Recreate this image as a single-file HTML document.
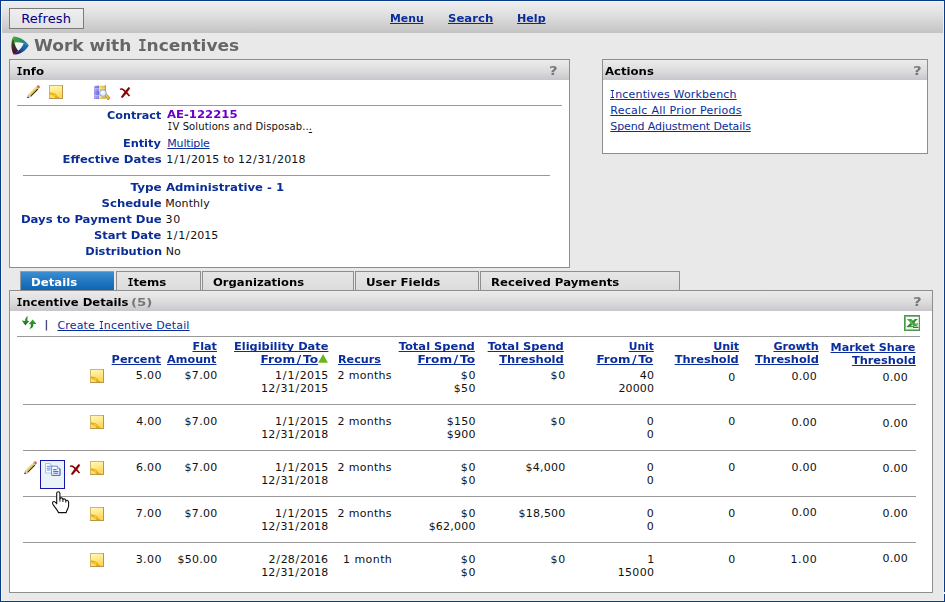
<!DOCTYPE html>
<html lang="en">
<head>
<meta charset="utf-8">
<title>Work with Incentives</title>
<style>
html,body{margin:0;padding:0;}
body{width:945px;height:602px;overflow:hidden;position:relative;background:#e9e9e9;font-family:"DejaVu Sans","Liberation Sans",sans-serif;font-size:11px;}
.abs,.t{position:absolute;}
.t{white-space:nowrap;text-decoration-thickness:1px;text-underline-offset:1px;text-decoration-skip-ink:none;}
a.t{cursor:pointer;}
.si,.sib{font-family:"DejaVu Sans Mono","Liberation Mono",monospace;display:inline-block;transform:scaleX(.72);margin:0 -.075em;text-decoration-thickness:1px;text-underline-offset:1px;}
.sib{transform:scaleX(.86);margin:0 -.03em;}
#frame{left:0;top:0;width:943px;height:600px;border:1px solid #0a3c86;z-index:50;pointer-events:none;box-shadow:inset 1px 1px 0 #f8f2ee, inset -1px -1px 0 #f1efee;}
#hdr{left:1px;top:1px;width:943px;height:32px;background:linear-gradient(#efeded 0%,#e4e3e3 35%,#d0d0d0 75%,#c3c3c3 100%);}
#btn{left:9px;top:8px;width:73px;height:19px;border:1px solid #7b7b7b;background:linear-gradient(#efefef,#e2e2e2);box-sizing:content-box;}
.panel{background:#fff;border:1px solid #8e8e8e;box-sizing:border-box;}
.phead{top:0;height:20px;background:linear-gradient(#ececec 0%,#dddcdd 55%,#c9c6cb 100%);position:absolute;left:0;right:0;}
.hr{height:1px;background:#999;}
.tab{top:271px;height:19px;box-sizing:border-box;border:1px solid #8e8e8e;border-bottom:none;background:linear-gradient(#e6e6e6,#dcdcdc);}
.tab.on{border:1px solid #9a9a9a;border-width:1px 0 0 1px;background:linear-gradient(#3d8dd0 0%,#2178c2 50%,#0f65b2 100%);}
svg{position:absolute;overflow:visible;}
</style>
</head>
<body>
<div class="abs" id="hdr"></div>
<div class="abs" id="btn"></div>

<!-- panels -->
<div class="abs panel" style="left:9px;top:59px;width:561px;height:209px;"><div class="phead"></div></div>
<div class="abs panel" style="left:602px;top:59px;width:326px;height:95px;"><div class="phead"></div></div>
<div class="abs hr" style="left:17px;top:105px;width:545px;"></div>
<div class="abs hr" style="left:23px;top:175px;width:527px;"></div>

<!-- tabs -->
<div class="abs tab on" style="left:20px;width:94px;"></div>
<div class="abs tab" style="left:116px;width:85px;"></div>
<div class="abs tab" style="left:202px;width:152px;"></div>
<div class="abs tab" style="left:355px;width:124px;"></div>
<div class="abs tab" style="left:480px;width:200px;"></div>

<div class="abs panel" style="left:9px;top:290px;width:924px;height:303px;"><div class="phead"></div></div>
<div class="abs hr" style="left:17px;top:336px;width:903px;"></div>
<div class="abs hr" style="left:23px;top:404px;width:893px;"></div>
<div class="abs hr" style="left:23px;top:450px;width:893px;"></div>
<div class="abs hr" style="left:23px;top:496px;width:893px;"></div>
<div class="abs hr" style="left:23px;top:542px;width:893px;"></div>

<svg style="left:10.5px;top:36px" width="19" height="20" viewBox="0 0 19 20"><defs><linearGradient id="lg1" x1="0" y1="0" x2="1" y2="0.5"><stop offset="0" stop-color="#3fae2c"/><stop offset="0.45" stop-color="#2f9a48"/><stop offset="1" stop-color="#1878b4"/></linearGradient><linearGradient id="lg2" x1="1" y1="0" x2="0" y2="1"><stop offset="0" stop-color="#1878b8"/><stop offset="0.4" stop-color="#1a62a8"/><stop offset="0.72" stop-color="#2a2870"/><stop offset="1" stop-color="#3c0848"/></linearGradient><linearGradient id="lg3" x1="0" y1="0" x2="0" y2="1"><stop offset="0" stop-color="#3a9a2c"/><stop offset="0.45" stop-color="#3a3a22"/><stop offset="1" stop-color="#4a0634"/></linearGradient><filter id="lb" x="-10%" y="-10%" width="120%" height="120%"><feGaussianBlur stdDeviation="0.35"/></filter></defs><path d="M3,6.2 L13,7 L7.3,15 Z" fill="#f3f3f3"/><g filter="url(#lb)"><path d="M2.2,0.4 C7.5,0.2 14.5,4 17.8,9.4 L12.6,7.3 C9.4,6.1 6,6.2 3.5,6.6 Z" fill="url(#lg1)"/><path d="M17.8,9.4 C15,14.6 8.5,18.8 2.6,18.6 L7.3,14.7 C9.8,12.9 11.8,10.2 12.6,7.3 Z" fill="url(#lg2)"/><path d="M2.6,18.6 C-0.2,13 -0.2,6 2.2,0.4 L3.5,6.6 C3.9,9.8 5.4,12.8 7.3,14.7 Z" fill="url(#lg3)"/></g></svg>
<svg style="left:27px;top:85px" width="14" height="14" viewBox="0 0 14 14"><g transform="translate(0.4,13) rotate(-45.5)"><path d="M0,0 L3.6,-1.6 L3.6,1.6 Z" fill="#f4f0e6" stroke="#777" stroke-width="0.5"/><path d="M0,0 L1.6,-0.75 L1.6,0.75 Z" fill="#111"/><rect x="3.6" y="-1.6" width="10" height="3.2" fill="#ead060"/><rect x="3.6" y="-1.6" width="10" height="1" fill="#f6eaa0"/><rect x="3.6" y="0.7" width="10" height="1" fill="#141000"/><path d="M5,-1.6V0.7M6.4,-1.6V0.7M7.8,-1.6V0.7M9.2,-1.6V0.7M10.6,-1.6V0.7M12,-1.6V0.7" stroke="#c4a038" stroke-width="0.5"/><rect x="13.6" y="-1.6" width="0.9" height="3.2" fill="#b4c2d8"/><path d="M14.5,-1.6 H15.6 Q17,-1.6 17,0 Q17,1.6 15.6,1.6 H14.5 Z" fill="#cf6456"/><path d="M14.5,-1.6 H15.6 Q16.5,-1.6 16.8,-0.6 H14.5 Z" fill="#e8988a"/></g></svg>
<svg style="left:49px;top:85px" width="14" height="14" viewBox="0 0 14 14"><defs><linearGradient id="nga" x1="0" y1="0" x2="0.25" y2="1"><stop offset="0" stop-color="#fff8b8"/><stop offset="0.5" stop-color="#ffe98a"/><stop offset="1" stop-color="#ffd55a"/></linearGradient></defs><rect x="0" y="0" width="14" height="14" fill="#b9974a"/><rect x="0" y="0" width="13" height="13" fill="#d3b56a"/><rect x="1" y="1" width="12" height="12" fill="url(#nga)"/><path d="M1,9 L1,13 L8,13 C6,11.8 3.6,10.4 1,9Z" fill="#ffdc62"/><path d="M1,7.2 C3.2,8 5.8,7.4 7.2,9.6 C8.2,11.4 9.4,12.4 11.2,13 L6.6,13 C5.4,11 3.2,9.8 1,9.2 Z" fill="#e6ac0c"/><path d="M3.2,8.6 C4.8,8.4 6,9.4 6.9,11 L5.8,11.5 C5.2,10.2 4.2,9.3 3.2,8.6 Z" fill="#ffd630"/></svg>
<svg style="left:94px;top:85px" width="16" height="15" viewBox="0 0 16 15"><defs><linearGradient id="bk1" x1="0" y1="0" x2="1" y2="0"><stop offset="0" stop-color="#a6a4f4"/><stop offset="0.5" stop-color="#8482ea"/><stop offset="1" stop-color="#6c69dc"/></linearGradient><linearGradient id="bk2" x1="0" y1="0" x2="1" y2="0"><stop offset="0" stop-color="#f6dc6a"/><stop offset="1" stop-color="#d9a92e"/></linearGradient><radialGradient id="lens" cx="0.4" cy="0.35" r="0.7"><stop offset="0" stop-color="#ffffff"/><stop offset="1" stop-color="#cfe0f4"/></radialGradient></defs><path d="M0,1.6 L2.2,0.4 L3,1.2 L4,0.3 L5.2,1.2 V14 H0 Z" fill="url(#bk1)"/><path d="M0.4,3.5H5M0.4,5H5M0.4,10.5H5M0.4,12H5" stroke="#c9c8fa" stroke-width="0.7"/><path d="M5.2,1.2 L6.6,0.3 L7.6,1.2 L8.8,0.2 L9.8,1.2 L11.6,0 V14 H5.2 Z" fill="url(#bk2)"/><path d="M5.6,3.2H11.4M5.6,11.6H11.4" stroke="#fbeeb0" stroke-width="0.8"/><path d="M11.2,0.4 L11.8,0 V8 H11.2Z" fill="#a8742a"/><path d="M10.4,10.4 L12.2,8.8 L15.9,12.4 L15.6,14 L14,14.9 Z" fill="#e6ad20" stroke="#6a6a6a" stroke-width="0.5"/><path d="M11.6,10 L14.8,13.4" stroke="#f8d868" stroke-width="0.8"/><circle cx="9" cy="8.1" r="3.3" fill="url(#lens)" stroke="#8ea4c4" stroke-width="0.9"/></svg>
<svg style="left:120.3px;top:87.3px" width="11" height="11" viewBox="0 0 11 11"><path d="M2,10.8 L10.6,1.6" stroke="#a8acac" stroke-width="1.1" stroke-dasharray="0.9 0.9"/><path d="M0.7,10.2 L2.8,10.8 L6.4,6.4 L10.2,1 L8.6,0 L4.6,4.8 Z" fill="#870000"/><path d="M0,2.4 C1.2,1.7 2.6,2 3.5,2.9 L6.4,5.6 C7.6,6.8 8.6,7.8 9.5,9.2" stroke="#870000" stroke-width="1.5" fill="none"/></svg>
<svg style="left:22px;top:316px" width="15" height="13" viewBox="0 0 15 13"><defs><linearGradient id="ga" x1="0" y1="0" x2="0" y2="1"><stop offset="0" stop-color="#3aa03a"/><stop offset="1" stop-color="#157a15"/></linearGradient></defs><path d="M6.3,0 C3.9,0.8 2.9,2.8 3.1,4.9 L-0.2,4.6 L3.4,9.4 L7.3,4.9 L5.6,4.9 C5.2,3 5.4,1.4 6.3,0 Z" fill="url(#ga)"/><path d="M10.6,3.6 L6.7,8.3 L8.7,8.1 C9.1,10 8.8,11.6 7.3,13 C10.5,12.6 11.7,10.6 11.3,8.1 L14.5,8 Z" fill="url(#ga)"/></svg>
<svg style="left:904px;top:315px" width="16" height="16" viewBox="0 0 16 16"><rect x="0" y="0" width="16" height="16" fill="#4c9a4c"/><rect x="1" y="1" width="14" height="14" fill="#7cba7c"/><rect x="2" y="2" width="12.6" height="12.2" fill="#fff"/><path d="M2.9,4 H7.4 L14.3,11.6 H9.8 Z" fill="#48a848"/><path d="M2.8,11.6 H6.6 L13.8,4 H10.8 Z" fill="#2f8f2f"/><path d="M5.6,6.9 L8.4,9.9 L9.6,8.8 L6.8,5.8Z" fill="#5cb85c"/><path d="M2.8,11.2 H10 V12.2 H2.8Z" fill="#2a7a2a"/><path d="M9,12 H14.4 V12.9 H9Z" fill="#226a22"/><path d="M11.8,8.4 L14,8.4 L14,9.6 L12.8,9.6Z" fill="#1f6e1f"/><path d="M3,13.3H10" stroke="#cfe6cf" stroke-width="0.6"/></svg>
<svg style="left:318.2px;top:354px" width="10" height="9" viewBox="0 0 10 9"><path d="M5.1,0 L9.9,8.8 H0.2 Z" fill="#6ab41e"/></svg>
<svg style="left:90px;top:369px" width="14" height="14" viewBox="0 0 14 14"><defs><linearGradient id="ngr0" x1="0" y1="0" x2="0.25" y2="1"><stop offset="0" stop-color="#fff8b8"/><stop offset="0.5" stop-color="#ffe98a"/><stop offset="1" stop-color="#ffd55a"/></linearGradient></defs><rect x="0" y="0" width="14" height="14" fill="#b9974a"/><rect x="0" y="0" width="13" height="13" fill="#d3b56a"/><rect x="1" y="1" width="12" height="12" fill="url(#ngr0)"/><path d="M1,9 L1,13 L8,13 C6,11.8 3.6,10.4 1,9Z" fill="#ffdc62"/><path d="M1,7.2 C3.2,8 5.8,7.4 7.2,9.6 C8.2,11.4 9.4,12.4 11.2,13 L6.6,13 C5.4,11 3.2,9.8 1,9.2 Z" fill="#e6ac0c"/><path d="M3.2,8.6 C4.8,8.4 6,9.4 6.9,11 L5.8,11.5 C5.2,10.2 4.2,9.3 3.2,8.6 Z" fill="#ffd630"/></svg>
<svg style="left:90px;top:415px" width="14" height="14" viewBox="0 0 14 14"><defs><linearGradient id="ngr1" x1="0" y1="0" x2="0.25" y2="1"><stop offset="0" stop-color="#fff8b8"/><stop offset="0.5" stop-color="#ffe98a"/><stop offset="1" stop-color="#ffd55a"/></linearGradient></defs><rect x="0" y="0" width="14" height="14" fill="#b9974a"/><rect x="0" y="0" width="13" height="13" fill="#d3b56a"/><rect x="1" y="1" width="12" height="12" fill="url(#ngr1)"/><path d="M1,9 L1,13 L8,13 C6,11.8 3.6,10.4 1,9Z" fill="#ffdc62"/><path d="M1,7.2 C3.2,8 5.8,7.4 7.2,9.6 C8.2,11.4 9.4,12.4 11.2,13 L6.6,13 C5.4,11 3.2,9.8 1,9.2 Z" fill="#e6ac0c"/><path d="M3.2,8.6 C4.8,8.4 6,9.4 6.9,11 L5.8,11.5 C5.2,10.2 4.2,9.3 3.2,8.6 Z" fill="#ffd630"/></svg>
<svg style="left:90px;top:461px" width="14" height="14" viewBox="0 0 14 14"><defs><linearGradient id="ngr2" x1="0" y1="0" x2="0.25" y2="1"><stop offset="0" stop-color="#fff8b8"/><stop offset="0.5" stop-color="#ffe98a"/><stop offset="1" stop-color="#ffd55a"/></linearGradient></defs><rect x="0" y="0" width="14" height="14" fill="#b9974a"/><rect x="0" y="0" width="13" height="13" fill="#d3b56a"/><rect x="1" y="1" width="12" height="12" fill="url(#ngr2)"/><path d="M1,9 L1,13 L8,13 C6,11.8 3.6,10.4 1,9Z" fill="#ffdc62"/><path d="M1,7.2 C3.2,8 5.8,7.4 7.2,9.6 C8.2,11.4 9.4,12.4 11.2,13 L6.6,13 C5.4,11 3.2,9.8 1,9.2 Z" fill="#e6ac0c"/><path d="M3.2,8.6 C4.8,8.4 6,9.4 6.9,11 L5.8,11.5 C5.2,10.2 4.2,9.3 3.2,8.6 Z" fill="#ffd630"/></svg>
<svg style="left:90px;top:507px" width="14" height="14" viewBox="0 0 14 14"><defs><linearGradient id="ngr3" x1="0" y1="0" x2="0.25" y2="1"><stop offset="0" stop-color="#fff8b8"/><stop offset="0.5" stop-color="#ffe98a"/><stop offset="1" stop-color="#ffd55a"/></linearGradient></defs><rect x="0" y="0" width="14" height="14" fill="#b9974a"/><rect x="0" y="0" width="13" height="13" fill="#d3b56a"/><rect x="1" y="1" width="12" height="12" fill="url(#ngr3)"/><path d="M1,9 L1,13 L8,13 C6,11.8 3.6,10.4 1,9Z" fill="#ffdc62"/><path d="M1,7.2 C3.2,8 5.8,7.4 7.2,9.6 C8.2,11.4 9.4,12.4 11.2,13 L6.6,13 C5.4,11 3.2,9.8 1,9.2 Z" fill="#e6ac0c"/><path d="M3.2,8.6 C4.8,8.4 6,9.4 6.9,11 L5.8,11.5 C5.2,10.2 4.2,9.3 3.2,8.6 Z" fill="#ffd630"/></svg>
<svg style="left:90px;top:553px" width="14" height="14" viewBox="0 0 14 14"><defs><linearGradient id="ngr4" x1="0" y1="0" x2="0.25" y2="1"><stop offset="0" stop-color="#fff8b8"/><stop offset="0.5" stop-color="#ffe98a"/><stop offset="1" stop-color="#ffd55a"/></linearGradient></defs><rect x="0" y="0" width="14" height="14" fill="#b9974a"/><rect x="0" y="0" width="13" height="13" fill="#d3b56a"/><rect x="1" y="1" width="12" height="12" fill="url(#ngr4)"/><path d="M1,9 L1,13 L8,13 C6,11.8 3.6,10.4 1,9Z" fill="#ffdc62"/><path d="M1,7.2 C3.2,8 5.8,7.4 7.2,9.6 C8.2,11.4 9.4,12.4 11.2,13 L6.6,13 C5.4,11 3.2,9.8 1,9.2 Z" fill="#e6ac0c"/><path d="M3.2,8.6 C4.8,8.4 6,9.4 6.9,11 L5.8,11.5 C5.2,10.2 4.2,9.3 3.2,8.6 Z" fill="#ffd630"/></svg>
<div class="abs" style="left:40px;top:460px;width:23px;height:27px;border:1px solid #1616a6;background:#eaf3f8;"></div>
<svg style="left:24px;top:460.5px" width="14" height="14" viewBox="0 0 14 14"><g transform="translate(0.4,13) rotate(-45.5)"><path d="M0,0 L3.6,-1.6 L3.6,1.6 Z" fill="#f4f0e6" stroke="#777" stroke-width="0.5"/><path d="M0,0 L1.6,-0.75 L1.6,0.75 Z" fill="#111"/><rect x="3.6" y="-1.6" width="10" height="3.2" fill="#ead060"/><rect x="3.6" y="-1.6" width="10" height="1" fill="#f6eaa0"/><rect x="3.6" y="0.7" width="10" height="1" fill="#141000"/><path d="M5,-1.6V0.7M6.4,-1.6V0.7M7.8,-1.6V0.7M9.2,-1.6V0.7M10.6,-1.6V0.7M12,-1.6V0.7" stroke="#c4a038" stroke-width="0.5"/><rect x="13.6" y="-1.6" width="0.9" height="3.2" fill="#b4c2d8"/><path d="M14.5,-1.6 H15.6 Q17,-1.6 17,0 Q17,1.6 15.6,1.6 H14.5 Z" fill="#cf6456"/><path d="M14.5,-1.6 H15.6 Q16.5,-1.6 16.8,-0.6 H14.5 Z" fill="#e8988a"/></g></svg>
<svg style="left:45px;top:463px" width="16" height="13" viewBox="0 0 16 13"><path d="M0.5,0.5 H5 L7.2,2.6 V10 H0.5 Z" fill="#fdfeff" stroke="#9db2e2" stroke-width="0.8"/><path d="M5,0.5 V2.6 H7.2" fill="#dfe8fa" stroke="#9db2e2" stroke-width="0.6"/><path d="M1.8,3.4H5.6M1.8,5.2H5.6M1.8,7H5.6" stroke="#4f7ee0" stroke-width="0.9"/><path d="M6.6,3.2 H12.4 L15,5.8 V12.4 H6.6 Z" fill="#fdfeff" stroke="#5f80d4" stroke-width="0.9"/><path d="M12.4,3.2 V5.8 H15" fill="#d4e0f8" stroke="#5f80d4" stroke-width="0.7"/><path d="M8.2,6.6H11.6M8.2,8.4H13.4M8.2,10.2H13.4" stroke="#2f62e0" stroke-width="1"/><path d="M7.2,12.4H15V5.8" stroke="#3050b0" stroke-width="0.6" fill="none"/></svg>
<svg style="left:70.2px;top:464px" width="11" height="11" viewBox="0 0 11 11"><path d="M2,10.8 L10.6,1.6" stroke="#a8acac" stroke-width="1.1" stroke-dasharray="0.9 0.9"/><path d="M0.7,10.2 L2.8,10.8 L6.4,6.4 L10.2,1 L8.6,0 L4.6,4.8 Z" fill="#870000"/><path d="M0,2.4 C1.2,1.7 2.6,2 3.5,2.9 L6.4,5.6 C7.6,6.8 8.6,7.8 9.5,9.2" stroke="#870000" stroke-width="1.5" fill="none"/></svg>
<svg style="left:51.6px;top:490.6px;z-index:40" width="18" height="23" viewBox="0 0 18 23"><path d="M4.7,2.2 C4.7,0.2 7.9,0.2 7.9,2.2 L7.9,7.6 C8.6,6.4 10.8,6.6 10.9,8.4 C11.8,7.4 13.8,7.8 13.8,9.6 C14.8,8.8 16.6,9.4 16.6,11.2 L16.6,14.6 C16.6,17.6 14.6,19 14.2,21.6 L6.4,21.6 C5.8,19.2 3.2,16.8 1.6,14.4 C0.4,12.8 0.2,11.4 1.2,10.7 C2.2,10 3.6,11.2 4.7,12.8 Z" fill="#fff" stroke="#111" stroke-width="1.1" stroke-linejoin="round"/><path d="M7.9,7.6V10.6M10.9,8.4V11M13.8,9.6V11.6" stroke="#111" stroke-width="1" fill="none"/></svg>

<span class="t" id="t0" style="font-size:13px;color:#00008b;line-height:15.132px;top:11px;letter-spacing:0.098px;left:21.20px;">Refresh</span>
<a class="t" id="t1" style="font-size:11px;color:#0a2d9c;font-weight:bold;text-decoration:underline;line-height:12.804px;top:13px;transform:scaleX(0.9876);transform-origin:0 50%;left:390.01px;">Menu</a>
<a class="t" id="t2" style="font-size:11px;color:#0a2d9c;font-weight:bold;text-decoration:underline;line-height:12.804px;top:13px;transform:scaleX(1.0614);transform-origin:0 50%;left:447.76px;">Search</a>
<a class="t" id="t3" style="font-size:11px;color:#0a2d9c;font-weight:bold;text-decoration:underline;line-height:12.804px;top:13px;transform:scaleX(1.0118);transform-origin:0 50%;left:517.46px;">Help</a>
<span class="t" id="t4" style="font-size:16px;color:#666;font-weight:bold;line-height:18.624px;top:37px;transform:scaleX(1.0644);transform-origin:0 50%;left:34.26px;">Work with <span class="sib">I</span>ncentives</span>
<span class="t" id="t5" style="font-size:11px;color:#000;font-weight:bold;line-height:12.804px;top:66px;transform:scaleX(1.0717);transform-origin:0 50%;left:16.06px;"><span class="sib">I</span>nfo</span>
<span class="t" id="t6" style="font-size:12px;color:#787878;font-weight:bold;line-height:13.968px;top:65px;transform:scaleX(1.2413);transform-origin:0 50%;left:549.15px;">?</span>
<span class="t" id="t7" style="font-size:11px;color:#000;font-weight:bold;line-height:12.804px;top:66px;transform:scaleX(1.0633);transform-origin:0 50%;left:604.63px;">Actions</span>
<span class="t" id="t8" style="font-size:12px;color:#787878;font-weight:bold;line-height:13.968px;top:65px;transform:scaleX(1.2412);transform-origin:0 50%;left:912.71px;">?</span>
<a class="t" id="t9" style="font-size:11px;color:#0a2d9c;text-decoration:underline;line-height:12.804px;top:89px;letter-spacing:0.172px;left:610.02px;"><span class="si" style="text-decoration:underline;">I</span>ncentives Workbench</a>
<a class="t" id="t10" style="font-size:11px;color:#0a2d9c;text-decoration:underline;line-height:12.804px;top:105px;letter-spacing:0.260px;left:610.30px;">Recalc All Prior Periods</a>
<a class="t" id="t11" style="font-size:11px;color:#0a2d9c;text-decoration:underline;line-height:12.804px;top:121px;letter-spacing:-0.103px;left:610.30px;">Spend Adjustment Details</a>
<span class="t" id="t12" style="font-size:11px;color:#0a2d96;font-weight:bold;line-height:12.804px;top:110px;transform:scaleX(1.0166);transform-origin:100% 50%;right:784.07px;">Contract</span>
<span class="t" id="t13" style="font-size:11px;color:#0a2d96;font-weight:bold;line-height:12.804px;top:138px;transform:scaleX(1.0303);transform-origin:100% 50%;right:784.01px;">Entity</span>
<span class="t" id="t14" style="font-size:11px;color:#0a2d96;font-weight:bold;line-height:12.804px;top:154px;transform:scaleX(1.0587);transform-origin:100% 50%;right:783.43px;">Effective Dates</span>
<span class="t" id="t15" style="font-size:11px;color:#0a2d96;font-weight:bold;line-height:12.804px;top:182px;transform:scaleX(1.0872);transform-origin:100% 50%;right:783.75px;">Type</span>
<span class="t" id="t16" style="font-size:11px;color:#0a2d96;font-weight:bold;line-height:12.804px;top:198px;transform:scaleX(1.0602);transform-origin:100% 50%;right:783.38px;">Schedule</span>
<span class="t" id="t17" style="font-size:11px;color:#0a2d96;font-weight:bold;line-height:12.804px;top:214px;transform:scaleX(1.0611);transform-origin:100% 50%;right:783.65px;">Days to Payment Due</span>
<span class="t" id="t18" style="font-size:11px;color:#0a2d96;font-weight:bold;line-height:12.804px;top:230px;transform:scaleX(1.0475);transform-origin:100% 50%;right:783.70px;">Start Date</span>
<span class="t" id="t19" style="font-size:11px;color:#0a2d96;font-weight:bold;line-height:12.804px;top:246px;transform:scaleX(1.0374);transform-origin:100% 50%;right:783.20px;">Distribution</span>
<span class="t" id="t20" style="font-size:11px;color:#6a00c8;font-weight:bold;line-height:12.804px;top:109px;transform:scaleX(1.0602);transform-origin:0 50%;left:167.14px;">AE-122215</span>
<span class="t" id="t21" style="font-size:10px;color:#111;line-height:11.64px;top:121px;letter-spacing:0.120px;left:167.74px;"><span class="si">I</span>V Solutions and Disposab..<a style="text-decoration:underline;text-underline-offset:2px;text-decoration-thickness:1px;color:#113">.</a></span>
<a class="t" id="t22" style="font-size:11px;color:#0a2d9c;text-decoration:underline;line-height:12.804px;top:138px;letter-spacing:-0.163px;left:167.30px;">Multiple</a>
<span class="t" id="t23" style="font-size:11px;color:#111;line-height:12.804px;top:154px;letter-spacing:0.143px;left:166.35px;"><span style="letter-spacing:0.793px">1/</span><span style="letter-spacing:0.793px">1/</span>2015 to 1<span style="letter-spacing:0.793px">2/</span>3<span style="letter-spacing:0.793px">1/</span>2018</span>
<span class="t" id="t24" style="font-size:11px;color:#0a2d96;font-weight:bold;line-height:12.804px;top:182px;transform:scaleX(1.0599);transform-origin:0 50%;left:165.84px;">Administrative - 1</span>
<span class="t" id="t25" style="font-size:11px;color:#111;line-height:12.804px;top:198px;letter-spacing:0.080px;left:165.23px;">Monthly</span>
<span class="t" id="t26" style="font-size:11px;color:#111;line-height:12.804px;top:214px;letter-spacing:0.819px;left:165.55px;">30</span>
<span class="t" id="t27" style="font-size:11px;color:#111;line-height:12.804px;top:230px;letter-spacing:0.043px;left:166.05px;"><span style="letter-spacing:0.693px">1/</span><span style="letter-spacing:0.693px">1/</span>2015</span>
<span class="t" id="t28" style="font-size:11px;color:#111;line-height:12.804px;top:246px;letter-spacing:0.119px;left:165.65px;">No</span>
<span class="t" id="t29" style="font-size:11px;color:#fff;font-weight:bold;line-height:12.804px;top:277px;transform:scaleX(1.0656);transform-origin:0 50%;left:31.27px;">Details</span>
<span class="t" id="t30" style="font-size:11px;color:#000;font-weight:bold;line-height:12.804px;top:277px;transform:scaleX(1.0737);transform-origin:0 50%;left:127.19px;"><span class="sib">I</span>tems</span>
<span class="t" id="t31" style="font-size:11px;color:#000;font-weight:bold;line-height:12.804px;top:277px;transform:scaleX(1.0531);transform-origin:0 50%;left:213.31px;">Organizations</span>
<span class="t" id="t32" style="font-size:11px;color:#000;font-weight:bold;line-height:12.804px;top:277px;transform:scaleX(1.0733);transform-origin:0 50%;left:366.28px;">User Fields</span>
<span class="t" id="t33" style="font-size:11px;color:#000;font-weight:bold;line-height:12.804px;top:277px;transform:scaleX(1.0641);transform-origin:0 50%;left:491.09px;">Received Payments</span>
<span class="t" id="t34" style="font-size:11px;color:#000;font-weight:bold;line-height:12.804px;top:297px;transform:scaleX(1.0564);transform-origin:0 50%;left:15.70px;"><span class="sib">I</span>ncentive Details</span>
<span class="t" id="t35" style="font-size:11px;color:#777;font-weight:bold;line-height:12.804px;top:297px;transform:scaleX(1.2072);transform-origin:0 50%;left:131.33px;">(5)</span>
<span class="t" id="t36" style="font-size:12px;color:#787878;font-weight:bold;line-height:13.968px;top:296px;transform:scaleX(1.2426);transform-origin:0 50%;left:912.70px;">?</span>
<span class="t" id="t37" style="font-size:11px;color:#000;line-height:12.804px;top:319px;left:44.50px;">|</span>
<a class="t" id="t38" style="font-size:11px;color:#0a2d9c;text-decoration:underline;line-height:12.804px;top:320px;letter-spacing:0.166px;left:57.41px;">Create <span class="si" style="text-decoration:underline;">I</span>ncentive Detail</a>
<a class="t" id="t39" style="font-size:11px;color:#0a2d9c;font-weight:bold;text-decoration:underline;line-height:12.804px;top:354px;transform:scaleX(1.0290);transform-origin:100% 50%;right:784.00px;">Percent</a>
<a class="t" id="t40" style="font-size:11px;color:#0a2d9c;font-weight:bold;text-decoration:underline;line-height:12.804px;top:341px;transform:scaleX(1.0220);transform-origin:100% 50%;right:728.23px;">Flat</a>
<a class="t" id="t41" style="font-size:11px;color:#0a2d9c;font-weight:bold;text-decoration:underline;line-height:12.804px;top:354px;transform:scaleX(1.0194);transform-origin:100% 50%;right:728.36px;">Amount</a>
<a class="t" id="t42" style="font-size:11px;color:#0a2d9c;font-weight:bold;text-decoration:underline;line-height:12.804px;top:341px;transform:scaleX(1.0328);transform-origin:100% 50%;right:616.88px;">Eligibility Date</a>
<a class="t" id="t43" style="font-size:11px;color:#0a2d9c;font-weight:bold;text-decoration:underline;line-height:12.804px;top:354px;transform:scaleX(1.1055);transform-origin:100% 50%;right:627.00px;">Fro<span style="letter-spacing:1.600px">m/</span>To</a>
<a class="t" id="t44" style="font-size:11px;color:#0a2d9c;font-weight:bold;text-decoration:underline;line-height:12.804px;top:354px;transform:scaleX(1.0172);transform-origin:0 50%;left:338.41px;">Recurs</a>
<a class="t" id="t45" style="font-size:11px;color:#0a2d9c;font-weight:bold;text-decoration:underline;line-height:12.804px;top:341px;transform:scaleX(1.0461);transform-origin:100% 50%;right:470.39px;">Total Spend</a>
<a class="t" id="t46" style="font-size:11px;color:#0a2d9c;font-weight:bold;text-decoration:underline;line-height:12.804px;top:354px;transform:scaleX(1.1055);transform-origin:100% 50%;right:470.35px;">Fro<span style="letter-spacing:1.600px">m/</span>To</a>
<a class="t" id="t47" style="font-size:11px;color:#0a2d9c;font-weight:bold;text-decoration:underline;line-height:12.804px;top:341px;transform:scaleX(1.0461);transform-origin:100% 50%;right:380.87px;">Total Spend</a>
<a class="t" id="t48" style="font-size:11px;color:#0a2d9c;font-weight:bold;text-decoration:underline;line-height:12.804px;top:354px;transform:scaleX(1.0464);transform-origin:100% 50%;right:380.75px;">Threshold</a>
<a class="t" id="t49" style="font-size:11px;color:#0a2d9c;font-weight:bold;text-decoration:underline;line-height:12.804px;top:341px;transform:scaleX(0.9729);transform-origin:100% 50%;right:291.71px;">Unit</a>
<a class="t" id="t50" style="font-size:11px;color:#0a2d9c;font-weight:bold;text-decoration:underline;line-height:12.804px;top:354px;transform:scaleX(1.0882);transform-origin:100% 50%;right:291.85px;">Fro<span style="letter-spacing:1.600px">m/</span>To</a>
<a class="t" id="t51" style="font-size:11px;color:#0a2d9c;font-weight:bold;text-decoration:underline;line-height:12.804px;top:341px;right:206.00px;">Unit</a>
<a class="t" id="t52" style="font-size:11px;color:#0a2d9c;font-weight:bold;text-decoration:underline;line-height:12.804px;top:354px;transform:scaleX(1.0383);transform-origin:100% 50%;right:205.93px;">Threshold</a>
<a class="t" id="t53" style="font-size:11px;color:#0a2d9c;font-weight:bold;text-decoration:underline;line-height:12.804px;top:341px;right:126.30px;">Growth</a>
<a class="t" id="t54" style="font-size:11px;color:#0a2d9c;font-weight:bold;text-decoration:underline;line-height:12.804px;top:354px;transform:scaleX(1.0332);transform-origin:100% 50%;right:126.70px;">Threshold</a>
<a class="t" id="t55" style="font-size:11px;color:#0a2d9c;font-weight:bold;text-decoration:underline;line-height:12.804px;top:342px;transform:scaleX(1.0175);transform-origin:100% 50%;right:29.69px;">Market Share</a>
<a class="t" id="t56" style="font-size:11px;color:#0a2d9c;font-weight:bold;text-decoration:underline;line-height:12.804px;top:355px;transform:scaleX(1.0342);transform-origin:100% 50%;right:29.36px;">Threshold</a>
<span class="t" id="t57" style="font-size:11px;color:#111;line-height:12.804px;top:370px;letter-spacing:0.366px;right:783.56px;margin-right:-0.366px;">5.00</span>
<span class="t" id="t58" style="font-size:11px;color:#111;line-height:12.804px;top:370px;letter-spacing:0.314px;right:727.74px;margin-right:-0.314px;">$7.00</span>
<span class="t" id="t59" style="font-size:11px;color:#111;line-height:12.804px;top:370px;letter-spacing:0.187px;right:616.62px;margin-right:-0.187px;"><span style="letter-spacing:0.837px">1/</span><span style="letter-spacing:0.837px">1/</span>2015</span>
<span class="t" id="t60" style="font-size:11px;color:#111;line-height:12.804px;top:383px;letter-spacing:0.133px;right:616.67px;margin-right:-0.133px;">1<span style="letter-spacing:0.783px">2/</span>3<span style="letter-spacing:0.783px">1/</span>2015</span>
<span class="t" id="t61" style="font-size:11px;color:#111;line-height:12.804px;top:370px;letter-spacing:0.296px;right:553.44px;margin-right:-0.296px;">2 months</span>
<span class="t" id="t62" style="font-size:11px;color:#111;line-height:12.804px;top:370px;letter-spacing:0.798px;right:469.57px;margin-right:-0.798px;">$0</span>
<span class="t" id="t63" style="font-size:11px;color:#111;line-height:12.804px;top:383px;letter-spacing:0.401px;right:469.55px;margin-right:-0.401px;">$50</span>
<span class="t" id="t64" style="font-size:11px;color:#111;line-height:12.804px;top:370px;letter-spacing:0.791px;right:379.73px;margin-right:-0.791px;">$0</span>
<span class="t" id="t65" style="font-size:11px;color:#111;line-height:12.804px;top:370px;letter-spacing:0.336px;right:291.03px;margin-right:-0.336px;">40</span>
<span class="t" id="t66" style="font-size:11px;color:#111;line-height:12.804px;top:383px;letter-spacing:0.146px;right:291.02px;margin-right:-0.146px;">20000</span>
<span class="t" id="t67" style="font-size:11px;color:#111;line-height:12.804px;top:372px;right:209.67px;">0</span>
<span class="t" id="t68" style="font-size:11px;color:#111;line-height:12.804px;top:371px;letter-spacing:0.256px;right:128.32px;margin-right:-0.256px;">0.00</span>
<span class="t" id="t69" style="font-size:11px;color:#111;line-height:12.804px;top:372px;letter-spacing:0.256px;right:37.32px;margin-right:-0.256px;">0.00</span>
<span class="t" id="t70" style="font-size:11px;color:#111;line-height:12.804px;top:416px;letter-spacing:0.264px;right:783.56px;margin-right:-0.264px;">4.00</span>
<span class="t" id="t71" style="font-size:11px;color:#111;line-height:12.804px;top:416px;letter-spacing:0.314px;right:727.74px;margin-right:-0.314px;">$7.00</span>
<span class="t" id="t72" style="font-size:11px;color:#111;line-height:12.804px;top:416px;letter-spacing:0.187px;right:616.62px;margin-right:-0.187px;"><span style="letter-spacing:0.837px">1/</span><span style="letter-spacing:0.837px">1/</span>2015</span>
<span class="t" id="t73" style="font-size:11px;color:#111;line-height:12.804px;top:429px;letter-spacing:0.106px;right:616.85px;margin-right:-0.106px;">1<span style="letter-spacing:0.756px">2/</span>3<span style="letter-spacing:0.756px">1/</span>2018</span>
<span class="t" id="t74" style="font-size:11px;color:#111;line-height:12.804px;top:416px;letter-spacing:0.296px;right:553.44px;margin-right:-0.296px;">2 months</span>
<span class="t" id="t75" style="font-size:11px;color:#111;line-height:12.804px;top:416px;letter-spacing:0.266px;right:469.55px;margin-right:-0.266px;">$150</span>
<span class="t" id="t76" style="font-size:11px;color:#111;line-height:12.804px;top:429px;letter-spacing:0.264px;right:469.55px;margin-right:-0.264px;">$900</span>
<span class="t" id="t77" style="font-size:11px;color:#111;line-height:12.804px;top:416px;letter-spacing:0.791px;right:379.73px;margin-right:-0.791px;">$0</span>
<span class="t" id="t78" style="font-size:11px;color:#111;line-height:12.804px;top:416px;right:291.35px;">0</span>
<span class="t" id="t79" style="font-size:11px;color:#111;line-height:12.804px;top:429px;right:291.35px;">0</span>
<span class="t" id="t80" style="font-size:11px;color:#111;line-height:12.804px;top:416px;right:209.67px;">0</span>
<span class="t" id="t81" style="font-size:11px;color:#111;line-height:12.804px;top:417px;letter-spacing:0.256px;right:128.32px;margin-right:-0.256px;">0.00</span>
<span class="t" id="t82" style="font-size:11px;color:#111;line-height:12.804px;top:418px;letter-spacing:0.256px;right:37.32px;margin-right:-0.256px;">0.00</span>
<span class="t" id="t83" style="font-size:11px;color:#111;line-height:12.804px;top:462px;letter-spacing:0.324px;right:783.60px;margin-right:-0.324px;">6.00</span>
<span class="t" id="t84" style="font-size:11px;color:#111;line-height:12.804px;top:462px;letter-spacing:0.314px;right:727.74px;margin-right:-0.314px;">$7.00</span>
<span class="t" id="t85" style="font-size:11px;color:#111;line-height:12.804px;top:462px;letter-spacing:0.187px;right:616.62px;margin-right:-0.187px;"><span style="letter-spacing:0.837px">1/</span><span style="letter-spacing:0.837px">1/</span>2015</span>
<span class="t" id="t86" style="font-size:11px;color:#111;line-height:12.804px;top:475px;letter-spacing:0.106px;right:616.85px;margin-right:-0.106px;">1<span style="letter-spacing:0.756px">2/</span>3<span style="letter-spacing:0.756px">1/</span>2018</span>
<span class="t" id="t87" style="font-size:11px;color:#111;line-height:12.804px;top:462px;letter-spacing:0.296px;right:553.44px;margin-right:-0.296px;">2 months</span>
<span class="t" id="t88" style="font-size:11px;color:#111;line-height:12.804px;top:462px;letter-spacing:0.798px;right:469.57px;margin-right:-0.798px;">$0</span>
<span class="t" id="t89" style="font-size:11px;color:#111;line-height:12.804px;top:475px;letter-spacing:0.798px;right:469.57px;margin-right:-0.798px;">$0</span>
<span class="t" id="t90" style="font-size:11px;color:#111;line-height:12.804px;top:462px;letter-spacing:0.281px;right:379.65px;margin-right:-0.281px;">$4,000</span>
<span class="t" id="t91" style="font-size:11px;color:#111;line-height:12.804px;top:462px;right:291.35px;">0</span>
<span class="t" id="t92" style="font-size:11px;color:#111;line-height:12.804px;top:475px;right:291.35px;">0</span>
<span class="t" id="t93" style="font-size:11px;color:#111;line-height:12.804px;top:462px;right:209.67px;">0</span>
<span class="t" id="t94" style="font-size:11px;color:#111;line-height:12.804px;top:462px;letter-spacing:0.256px;right:128.32px;margin-right:-0.256px;">0.00</span>
<span class="t" id="t95" style="font-size:11px;color:#111;line-height:12.804px;top:463px;letter-spacing:0.256px;right:37.32px;margin-right:-0.256px;">0.00</span>
<span class="t" id="t96" style="font-size:11px;color:#111;line-height:12.804px;top:508px;letter-spacing:0.366px;right:783.56px;margin-right:-0.366px;">7.00</span>
<span class="t" id="t97" style="font-size:11px;color:#111;line-height:12.804px;top:508px;letter-spacing:0.314px;right:727.74px;margin-right:-0.314px;">$7.00</span>
<span class="t" id="t98" style="font-size:11px;color:#111;line-height:12.804px;top:508px;letter-spacing:0.187px;right:616.62px;margin-right:-0.187px;"><span style="letter-spacing:0.837px">1/</span><span style="letter-spacing:0.837px">1/</span>2015</span>
<span class="t" id="t99" style="font-size:11px;color:#111;line-height:12.804px;top:521px;letter-spacing:0.106px;right:616.85px;margin-right:-0.106px;">1<span style="letter-spacing:0.756px">2/</span>3<span style="letter-spacing:0.756px">1/</span>2018</span>
<span class="t" id="t100" style="font-size:11px;color:#111;line-height:12.804px;top:508px;letter-spacing:0.296px;right:553.44px;margin-right:-0.296px;">2 months</span>
<span class="t" id="t101" style="font-size:11px;color:#111;line-height:12.804px;top:508px;letter-spacing:0.798px;right:469.57px;margin-right:-0.798px;">$0</span>
<span class="t" id="t102" style="font-size:11px;color:#111;line-height:12.804px;top:521px;letter-spacing:0.213px;right:469.58px;margin-right:-0.213px;">$62,000</span>
<span class="t" id="t103" style="font-size:11px;color:#111;line-height:12.804px;top:508px;letter-spacing:0.235px;right:379.65px;margin-right:-0.235px;">$18,500</span>
<span class="t" id="t104" style="font-size:11px;color:#111;line-height:12.804px;top:508px;right:291.35px;">0</span>
<span class="t" id="t105" style="font-size:11px;color:#111;line-height:12.804px;top:521px;right:291.35px;">0</span>
<span class="t" id="t106" style="font-size:11px;color:#111;line-height:12.804px;top:508px;right:209.67px;">0</span>
<span class="t" id="t107" style="font-size:11px;color:#111;line-height:12.804px;top:507px;letter-spacing:0.256px;right:128.32px;margin-right:-0.256px;">0.00</span>
<span class="t" id="t108" style="font-size:11px;color:#111;line-height:12.804px;top:508px;letter-spacing:0.256px;right:37.32px;margin-right:-0.256px;">0.00</span>
<span class="t" id="t109" style="font-size:11px;color:#111;line-height:12.804px;top:554px;letter-spacing:0.420px;right:783.56px;margin-right:-0.420px;">3.00</span>
<span class="t" id="t110" style="font-size:11px;color:#111;line-height:12.804px;top:554px;letter-spacing:0.281px;right:727.66px;margin-right:-0.281px;">$50.00</span>
<span class="t" id="t111" style="font-size:11px;color:#111;line-height:12.804px;top:554px;letter-spacing:0.067px;right:616.90px;margin-right:-0.067px;"><span style="letter-spacing:0.717px">2/</span>2<span style="letter-spacing:0.717px">8/</span>2016</span>
<span class="t" id="t112" style="font-size:11px;color:#111;line-height:12.804px;top:567px;letter-spacing:0.106px;right:616.85px;margin-right:-0.106px;">1<span style="letter-spacing:0.756px">2/</span>3<span style="letter-spacing:0.756px">1/</span>2018</span>
<span class="t" id="t113" style="font-size:11px;color:#111;line-height:12.804px;top:554px;letter-spacing:0.424px;right:553.17px;margin-right:-0.424px;">1 month</span>
<span class="t" id="t114" style="font-size:11px;color:#111;line-height:12.804px;top:554px;letter-spacing:0.798px;right:469.57px;margin-right:-0.798px;">$0</span>
<span class="t" id="t115" style="font-size:11px;color:#111;line-height:12.804px;top:567px;letter-spacing:0.798px;right:469.57px;margin-right:-0.798px;">$0</span>
<span class="t" id="t116" style="font-size:11px;color:#111;line-height:12.804px;top:554px;letter-spacing:0.791px;right:379.73px;margin-right:-0.791px;">$0</span>
<span class="t" id="t117" style="font-size:11px;color:#111;line-height:12.804px;top:554px;right:290.88px;">1</span>
<span class="t" id="t118" style="font-size:11px;color:#111;line-height:12.804px;top:567px;letter-spacing:0.303px;right:291.02px;margin-right:-0.303px;">15000</span>
<span class="t" id="t119" style="font-size:11px;color:#111;line-height:12.804px;top:554px;right:209.67px;">0</span>
<span class="t" id="t120" style="font-size:11px;color:#111;line-height:12.804px;top:554px;letter-spacing:0.561px;right:128.29px;margin-right:-0.561px;">1.00</span>
<span class="t" id="t121" style="font-size:11px;color:#111;line-height:12.804px;top:553px;letter-spacing:0.256px;right:37.32px;margin-right:-0.256px;">0.00</span>
<div class="abs" id="frame"></div>
<div class="abs" style="left:944px;top:592px;width:1px;height:2px;background:#e8eef6;z-index:51"></div>
</body>
</html>
